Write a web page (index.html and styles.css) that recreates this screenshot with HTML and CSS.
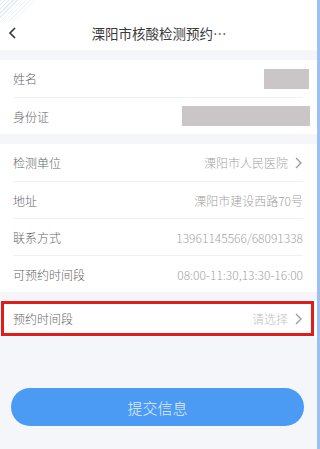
FILE: index.html
```html
<!DOCTYPE html>
<html lang="zh-CN">
<head>
    <meta charset="UTF-8">
    <meta name="viewport" content="width=device-width, initial-scale=1.0">
    <title>溧阳市核酸检测预约</title>
    <link rel="stylesheet" href="styles.css">
</head>
<body>
    <div class="page">
        <!-- Шапка -->
        <div class="header">
            <div class="back">
                <svg width="10" height="12" viewBox="0 0 10 12"><path d="M7 1 L2 6 L7 11" fill="none" stroke="#333" stroke-width="1.6"/></svg>
            </div>
            <div class="title">溧阳市核酸检测预约…</div>
        </div>

        <div class="group">
            <div class="row">
                <span class="label">姓名</span>
                <span class="mask mask-name"></span>
            </div>
            <div class="row">
                <span class="label">身份证</span>
                <span class="mask mask-id"></span>
            </div>
        </div>

        <div class="group">
            <div class="row">
                <span class="label">检测单位</span>
                <span class="value">溧阳市人民医院
                    <svg class="arrow" width="10" height="12" viewBox="0 0 10 12"><path d="M2 1 L7 6 L2 11" fill="none" stroke="#9a9a9a" stroke-width="1.3"/></svg>
                </span>
            </div>
            <div class="row">
                <span class="label">地址</span>
                <span class="value">溧阳市建设西路70号</span>
            </div>
            <div class="row">
                <span class="label">联系方式</span>
                <span class="value">13961145566/68091338</span>
            </div>
            <div class="row">
                <span class="label">可预约时间段</span>
                <span class="value">08:00-11:30,13:30-16:00</span>
            </div>
        </div>

        <div class="group group-pick">
            <div class="row marked">
                <span class="label">预约时间段</span>
                <span class="value placeholder">请选择
                    <svg class="arrow" width="10" height="12" viewBox="0 0 10 12"><path d="M2 1 L7 6 L2 11" fill="none" stroke="#9a9a9a" stroke-width="1.3"/></svg>
                </span>
            </div>
        </div>

        <button class="submit">提交信息</button>
    </div>
</body>
</html>
```

FILE: styles.css
```css
body {
    margin: 0;
    padding: 0;
    font-family: "Noto Sans CJK SC", "Liberation Sans", sans-serif;
    background: #f4f6fa;
}

.page {
    height: 449px;
    border-right: 3px solid #9dbff2;
    background: #f4f6fa;
    overflow: hidden;
}

.header {
    position: relative;
    height: 50px;
    padding-top: 16px;
    box-sizing: border-box;
    background: #fff;
    display: flex;
    align-items: center;
    justify-content: center;
}

.header::before {
    content: "";
    position: absolute;
    left: 0;
    top: 0;
    width: 40px;
    height: 22px;
    background: repeating-linear-gradient(135deg, rgba(150,180,230,0.35) 0 1px, transparent 1px 3px);
    -webkit-mask-image: linear-gradient(135deg, #000 10%, transparent 70%);
    mask-image: linear-gradient(135deg, #000 10%, transparent 70%);
}

.back {
    position: absolute;
    left: 8px;
    top: 27px;
    display: flex;
}

.title {
    font-size: 13.5px;
    color: #383838;
    margin-left: 1px;
}

.group {
    background: #fff;
    margin-top: 10px;
    padding: 0 14px 0 13px;
}

.group-pick {
    margin-top: 8px;
}

.row {
    height: 37px;
    display: flex;
    align-items: center;
    justify-content: space-between;
    box-sizing: border-box;
}

.row + .row {
    border-top: 1px solid #f1f1f3;
}

.label {
    font-size: 12px;
    font-weight: 300;
    color: #666;
}

.value {
    font-size: 12px;
    font-weight: 300;
    color: #a3a3a3;
    display: flex;
    align-items: center;
    gap: 6px;
}

.placeholder {
    color: #c2c2c2;
}

.arrow {
    margin-right: -1px;
}

.mask {
    background: #cac6c7;
    height: 20px;
}

.mask-name {
    width: 45px;
    margin-right: -6px;
}

.mask-id {
    width: 128px;
    margin-right: -7px;
}

.marked {
    position: relative;
}

.marked::after {
    content: "";
    position: absolute;
    left: -12px;
    right: -11px;
    top: 1px;
    bottom: 1px;
    border: 3px solid #e21b1b;
}

.submit {
    display: block;
    width: 293px;
    height: 38px;
    margin: 51px 0 0 11px;
    border: none;
    border-radius: 19px;
    background: #4b9bf5;
    color: #e3edfd;
    font-family: "Noto Sans CJK SC", "Liberation Sans", sans-serif;
    font-size: 15px;
    font-weight: 300;
}
```
